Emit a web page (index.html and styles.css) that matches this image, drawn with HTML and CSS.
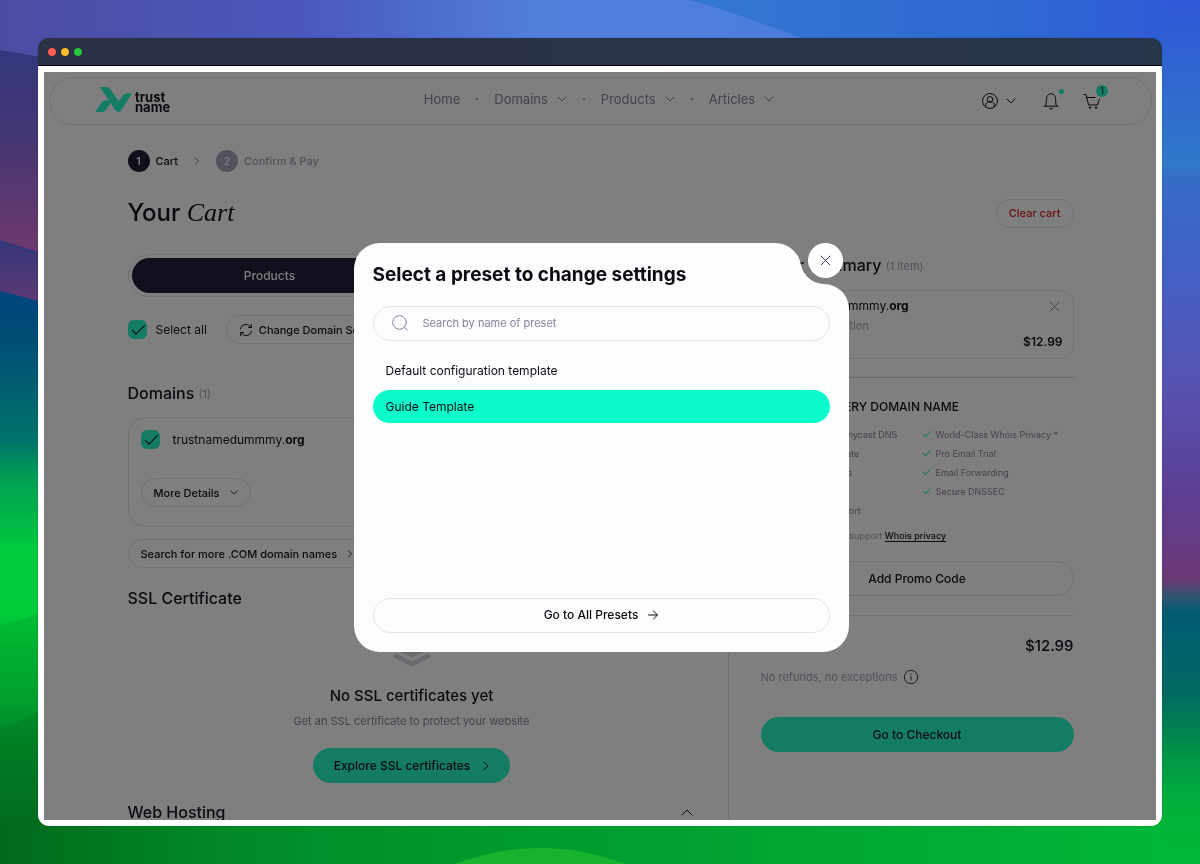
FILE: index.html
```html
<!DOCTYPE html>
<html lang="en">
<head>
<meta charset="utf-8">
<meta name="viewport" content="width=device-width, initial-scale=1">
<title>Your Cart – trustname</title>
<link rel="stylesheet" href="styles.css">
</head>
<body>
<svg class="wallpaper" viewBox="0 0 1200 864" preserveAspectRatio="none" aria-hidden="true">
  <defs>
    <linearGradient id="sky" x1="0" x2="1" y1="0" y2="0">
      <stop offset="0" stop-color="#4d4ca2"/><stop offset=".25" stop-color="#4a58bb"/><stop offset=".45" stop-color="#5080da"/><stop offset=".6" stop-color="#4f7fdc"/><stop offset="1" stop-color="#3c6fdc"/>
    </linearGradient>
    <linearGradient id="skyright" x1="0" x2="1" y1="0" y2="0">
      <stop offset="0" stop-color="#3278d2"/><stop offset=".7" stop-color="#2f66d2"/><stop offset="1" stop-color="#2f58d8"/>
    </linearGradient>
    <linearGradient id="dusk" gradientUnits="userSpaceOnUse" x1="0" y1="50" x2="0" y2="250">
      <stop offset="0" stop-color="#34387e"/><stop offset=".4" stop-color="#413673"/><stop offset="1" stop-color="#6d396e"/>
    </linearGradient>
    <linearGradient id="ridge" gradientUnits="userSpaceOnUse" x1="0" y1="240" x2="0" y2="302">
      <stop offset="0" stop-color="#343778"/><stop offset="1" stop-color="#5c3975"/>
    </linearGradient>
    <linearGradient id="valley" gradientUnits="userSpaceOnUse" x1="0" y1="290" x2="0" y2="864">
      <stop offset="0" stop-color="#00447e"/><stop offset=".1" stop-color="#005074"/><stop offset=".26" stop-color="#00726a"/><stop offset=".33" stop-color="#00a053"/><stop offset=".46" stop-color="#00cc3c"/><stop offset=".56" stop-color="#00cc38"/><stop offset=".7" stop-color="#00a42e"/><stop offset=".8" stop-color="#008025"/><stop offset="1" stop-color="#00641a"/>
    </linearGradient>
    <linearGradient id="rightside" gradientUnits="userSpaceOnUse" x1="0" y1="0" x2="0" y2="864">
      <stop offset="0" stop-color="#2f58d8"/><stop offset=".1" stop-color="#3068ce"/><stop offset=".19" stop-color="#2f78c8"/><stop offset=".21" stop-color="#366bc4"/><stop offset=".32" stop-color="#4360c2"/><stop offset=".44" stop-color="#5654b2"/><stop offset=".57" stop-color="#5c3f94"/><stop offset=".67" stop-color="#6c3876"/><stop offset=".69" stop-color="#32546f"/><stop offset=".71" stop-color="#005c74"/><stop offset=".8" stop-color="#006861"/><stop offset=".87" stop-color="#009247"/><stop offset=".93" stop-color="#00b13a"/><stop offset="1" stop-color="#00b936"/>
    </linearGradient>
    <linearGradient id="meadow" x1="0" x2="1" y1="0" y2="0">
      <stop offset="0" stop-color="#006a1c"/><stop offset=".2" stop-color="#008a26"/><stop offset=".4" stop-color="#00982c"/><stop offset=".7" stop-color="#00a632"/><stop offset="1" stop-color="#00b738"/>
    </linearGradient>
  </defs>
  <rect width="1200" height="864" fill="url(#sky)"/>
  <path d="M690 0Q760 20 860 62H1200V0Z" fill="url(#skyright)"/>
  <path d="M0 50L120 70V864H0Z" fill="url(#dusk)"/>
  <path d="M0 240L120 276V864H0Z" fill="url(#ridge)"/>
  <path d="M0 291L120 322V864H0Z" fill="url(#valley)"/>
  <path d="M0 625Q20 622 40 612V700H0Z" fill="#009c2c" opacity=".3"/>
  <path d="M0 728Q20 724 40 710V830H0Z" fill="#006a20" opacity=".25"/>
  <rect x="1162" width="38" height="864" fill="url(#rightside)"/>
  <path d="M38 810H1162V864H0V826H38Z" fill="url(#meadow)"/>
  <path d="M455 864Q540 832 625 864Z" fill="#18b32e"/>
</svg>

<div class="window">
  <div class="titlebar">
    <span class="light light-close"></span><span class="light light-min"></span><span class="light light-max"></span>
  </div>
  <div class="frame">
    <div class="app">
      <header class="header">
        <a class="logo" href="#">
          <svg width="37" height="25" viewBox="0 0 110 75" aria-hidden="true"><path d="M14 0H34Q41 0 45 6L71 43 83 26Q88 19 96 19H110L80 68Q76 75 70 75T60 69L46 48 32 70Q29 75 22 75H0L18 48Q24 40 33 40H40Z"/></svg>
          <span class="wordmark">trust<br>name</span>
        </a>
        <nav class="nav">
          <a href="#">Home</a><i class="dot"></i>
          <a href="#">Domains <svg class="chev" width="10" height="6" viewBox="0 0 10 6"><path d="M1 1l4 4 4-4"/></svg></a><i class="dot"></i>
          <a href="#">Products <svg class="chev" width="10" height="6" viewBox="0 0 10 6"><path d="M1 1l4 4 4-4"/></svg></a><i class="dot"></i>
          <a href="#">Articles <svg class="chev" width="10" height="6" viewBox="0 0 10 6"><path d="M1 1l4 4 4-4"/></svg></a>
        </nav>
        <div class="tools">
          <button class="icon-btn account" aria-label="Account">
            <svg width="18" height="18" viewBox="0 0 18 18"><circle cx="9" cy="9" r="7.500"/><circle cx="9" cy="7.300" r="2.800"/><path d="M4.800 14.600V13c0-1.800 1.200-2.900 2.800-2.900h2.800c1.600 0 2.800 1.100 2.800 2.900v1.600"/></svg>
            <svg width="10" height="6" viewBox="0 0 10 6"><path d="M1 1l4 4 4-4"/></svg>
          </button>
          <button class="icon-btn" aria-label="Notifications">
            <svg width="18" height="18" viewBox="0 0 18 18"><path d="M2 14.200h14M3.500 14c.8-1.800.8-4 .9-6.500C4.500 4 6.200 1.700 9 1.700s4.500 2.300 4.600 5.800c.1 2.500.1 4.700.9 6.500M7.300 16.300c.8 1 2.600 1 3.400 0"/></svg>
            <b class="ping"></b>
          </button>
          <button class="icon-btn" aria-label="Cart">
            <svg width="18" height="18" viewBox="0 0 18 18"><path d="M1 2.500h2l2.600 10.500h8.800l2-6M4 5.500h8M6 15.600c0 1.200 2 1.200 2 0zM12 15.600c0 1.200 2 1.200 2 0z"/></svg>
            <b class="count">1</b>
          </button>
        </div>
      </header>

      <main class="page">
        <ol class="steps">
          <li class="step"><span class="num">1</span>Cart</li>
          <li class="step-sep"><svg class="chev" width="6" height="10" viewBox="0 0 6 10"><path d="M1 1.500L4.500 5 1 8.500"/></svg></li>
          <li class="step step-next"><span class="num">2</span>Confirm &amp; Pay</li>
        </ol>
        <div class="title-row">
          <h1>Your <em>Cart</em></h1>
          <button class="pill small danger">Clear cart</button>
        </div>

        <div class="columns">
          <section class="items">
            <div class="tabs"><button class="tab active">Products</button><button class="tab" aria-label="Services"></button></div>
            <div class="select-row">
              <label class="check"><input type="checkbox" checked><span>Select all</span></label>
              <button class="pill small"><svg width="14" height="14" viewBox="0 0 14 14"><path d="M1.500 6C2 3.300 4.200 1.500 7 1.500c2.200 0 3.800 1 5 2.800M12.300 1.500v3H9.500M12.500 8C12 10.700 9.800 12.500 7 12.500c-2.200 0-3.800-1-5-2.800M1.700 12.500v-3h2.800"/></svg>Change Domain Settings</button>
            </div>
            <h2 class="domains-title">Domains <small>(1)</small></h2>
            <div class="card">
              <label class="check"><input type="checkbox" checked><span>trustnamedummmy.<strong>org</strong></span></label>
              <button class="pill small">More Details <svg width="8" height="5" viewBox="0 0 10 6"><path d="M1 1l4 4 4-4"/></svg></button>
            </div>
            <button class="pill small more">Search for more .COM domain names <svg width="6" height="8" viewBox="0 0 6 10"><path d="M1 1l4 4-4 4"/></svg></button>
            <h2>SSL Certificate</h2>
            <div class="empty">
              <svg class="stack" width="44" height="44" viewBox="0 0 44 44"><path d="M6 14l16-9 16 9-16 9zM6 23l16 8 16-8M6 32l16 8 16-8"/></svg>
              <h3>No SSL certificates yet</h3>
              <p>Get an SSL certificate to protect your website</p>
              <button class="pill primary explore">Explore SSL certificates <svg width="6" height="10" viewBox="0 0 6 10"><path d="M1 1l4 4-4 4"/></svg></button>
            </div>
            <h2 class="hosting">Web Hosting <svg width="12" height="7" viewBox="0 0 12 7"><path d="M1 6l5-5 5 5"/></svg></h2>
          </section>

          <aside class="summary">
            <h2>Order Summary <small>(1 item)</small></h2>
            <div class="order">
              <div class="order-name"><span>trustnamedummmy.<strong>org</strong></span>
                <button class="icon-btn" aria-label="Remove"><svg width="11" height="11" viewBox="0 0 11 11"><path d="M1 1l9 9M10 1l-9 9"/></svg></button></div>
              <div class="muted">Name registration</div>
              <strong class="price">$12.99</strong>
            </div>
            <h4>FREE WITH EVERY DOMAIN NAME</h4>
            <div class="perks">
              <ul>
                <li>Quick Premium Anycast DNS</li><li>Free SSL Certificate</li><li>Free DNS Records</li><li>Parking</li><li>24/7 Expert Support</li>
              </ul>
              <ul>
                <li>World-Class Whois Privacy *</li><li>Pro Email Trial</li><li>Email Forwarding</li><li>Secure DNSSEC</li>
              </ul>
            </div>
            <p class="note">* If your domain can support <a href="#">Whois privacy</a></p>
            <button class="pill wide">Add Promo Code</button>
            <div class="total"><span>Total</span><span>$12.99</span></div>
            <p class="refunds">No refunds, no exceptions <svg width="16" height="16" viewBox="0 0 16 16"><circle cx="8" cy="8" r="6.700"/><path d="M8 7.200v3.800M8 4.800v.4"/></svg></p>
            <button class="pill wide primary">Go to Checkout</button>
          </aside>
        </div>
      </main>

      <div class="scrim">
        <div class="dialog" role="dialog" aria-modal="true" aria-labelledby="dialog-title">
          <svg class="dialog-shape" viewBox="0 0 495 409" preserveAspectRatio="none" aria-hidden="true"><path d="M26 0H421A26 26 0 0 1 447 22A24 24 0 0 0 470 41A25 25 0 0 1 495 66V383A26 26 0 0 1 469 409H26A26 26 0 0 1 0 383V26A26 26 0 0 1 26 0Z"/></svg>
          <button class="close" aria-label="Close"><svg width="11" height="11" viewBox="0 0 11 11"><path d="M1 1l9 9M10 1l-9 9"/></svg></button>
          <h2 id="dialog-title">Select a preset to change settings</h2>
          <label class="search">
            <svg width="18" height="18" viewBox="0 0 18 18"><circle cx="8.500" cy="8.500" r="6.800"/><path d="M13.500 13.500l2.800 2.800"/></svg>
            <input type="search" placeholder="Search by name of preset" aria-label="Search by name of preset">
          </label>
          <div class="presets">
            <button class="preset">Default configuration template</button>
            <button class="preset selected">Guide Template</button>
          </div>
          <button class="pill wide">Go to All Presets <svg width="10" height="10" viewBox="0 0 10 10"><path d="M.5 5h9M5.500 1l4 4-4 4"/></svg></button>
        </div>
      </div>
    </div>
  </div>
</div>
</body>
</html>
```
FILE: styles.css
```css
* { box-sizing: border-box; margin: 0; padding: 0; }

:root {
  --ink: #12121f;
  --muted: #a4a3b8;
  --soft: #86859c;
  --line: #e2e2e2;
  --primary: #28f8c4;
  --paper: #fdfffd;
}

body {
  height: 100vh;
  padding: 38px;
  display: flex;
  font: 12px/16px Inter, "Liberation Sans", sans-serif;
  color: var(--ink);
  overflow: hidden;
}

button, input { font: inherit; color: inherit; }
button { background: none; border: 0; cursor: pointer; }
a { color: inherit; text-decoration: none; }
ul, ol { list-style: none; }
svg { flex: none; fill: none; stroke: currentColor; stroke-width: 1; stroke-linecap: round; stroke-linejoin: round; }
h1, h2, h3, h4 { font-weight: 500; }
small { font-size: 11px; font-weight: 400; color: var(--muted); vertical-align: 1px; }

.wallpaper { position: fixed; inset: 0; width: 100%; height: 100%; z-index: -1; stroke: none; }

.window {
  flex: 1;
  display: flex;
  flex-direction: column;
  border-radius: 11px;
  overflow: hidden;
  box-shadow: 0 0 1px rgba(0, 0, 0, .6);
}
.titlebar {
  display: flex;
  align-items: center;
  gap: 5px;
  height: 28px;
  padding-left: 10px;
  background: linear-gradient(90deg, #2c3045, #2a3349 55%, #26364b);
  border-bottom: 1px solid #05060f;
}
.light { width: 8px; height: 8px; border-radius: 50%; box-shadow: 0 0 1px #000; }
.light-close { background: #ff5f57; }
.light-min { background: #febc2e; }
.light-max { background: #28c840; }

.frame { flex: 1; display: flex; min-height: 0; padding: 6px; background: #fff; }
.app { position: relative; flex: 1; padding: 5px 4px 5px 5px; background: var(--paper); overflow: hidden; }

.header {
  display: grid;
  grid-template-columns: 1fr auto 1fr;
  align-items: center;
  height: 48px;
  padding: 0 50px 0 45px;
  border: 1px solid var(--line);
  border-radius: 24px;
}
.logo { display: flex; align-items: center; gap: 3px; }
.logo svg { margin-bottom: 3px; stroke: none; fill: var(--primary); }
.wordmark { margin-top: 2px; font-size: 13px; font-weight: 700; line-height: 10px; }
.nav { display: flex; align-items: center; gap: 16px; margin-bottom: 4px; padding-left: 2px; font-size: 13px; color: var(--soft); }
.nav a { display: flex; align-items: center; gap: 9px; }
.dot { width: 2px; height: 2px; border-radius: 50%; background: var(--soft); }
.chev { color: var(--soft); }
.tools { display: flex; justify-content: flex-end; align-items: center; gap: 23px; }
.icon-btn { position: relative; display: flex; align-items: center; gap: 7px; }
.tools .account { margin-right: 3px; }
.ping { position: absolute; top: -3px; right: -4px; width: 5px; height: 5px; border-radius: 50%; background: var(--primary); }
.count { position: absolute; top: -7px; right: -7px; width: 12px; height: 12px; border-radius: 50%; background: var(--primary); font-size: 9px; font-weight: 400; line-height: 12px; }

.page { max-width: 946px; margin: 0 auto; padding-top: 25px; }
.steps { display: flex; align-items: center; font-size: 11px; font-weight: 500; }
.step { display: flex; align-items: center; gap: 6px; }
.step-sep { display: flex; margin: 0 16px; }
.step-next { color: var(--muted); }
.num { width: 22px; height: 22px; border-radius: 50%; background: #1e2038; color: #fff; line-height: 22px; text-align: center; }
.step-next .num { background: var(--muted); }

.title-row { display: flex; justify-content: space-between; align-items: center; height: 30px; margin-top: 26px; }
h1 { font-size: 24px; line-height: 30px; }
h1 em { font-family: "Liberation Serif", serif; font-size: 26px; }

.pill {
  display: flex;
  align-items: center;
  justify-content: center;
  gap: 10px;
  height: 35px;
  padding: 0 18px;
  border: 1px solid var(--line);
  border-radius: 18px;
  font-weight: 500;
}
.small { height: 29px; padding: 0 12px; font-size: 11px; }
.wide { width: 100%; }
.primary { background: var(--primary); border-color: var(--primary); }
.danger { color: #d81c24; }
.explore { gap: 13px; padding: 0 20px; }

.columns { display: grid; grid-template-columns: 600px 1fr; margin-top: 26px; }
.items { padding-right: 32px; }
.items h2, .summary h2 { font-size: 16px; line-height: 20px; }
.tabs { display: flex; gap: 8px; padding: 3px; border: 1px solid var(--line); border-radius: 22px; }
.tab { flex: 1; height: 35px; border-radius: 18px; font-weight: 500; }
.active { background: #1e2038; color: #fff; }
.select-row { display: flex; align-items: center; gap: 19px; margin-top: 18px; }
.select-row .pill { gap: 6px; }
.check { display: flex; align-items: center; gap: 9px; }
.check input {
  appearance: none;
  width: 19px;
  height: 19px;
  border-radius: 6px;
  background: var(--primary);
}
.check input::after {
  content: "";
  display: block;
  width: 12px;
  height: 5px;
  margin: 5px 0 0 4px;
  border: solid var(--ink);
  border-width: 0 0 1px 1px;
  transform: rotate(-45deg);
}
.domains-title { margin-top: 39px; }
.card {
  display: flex;
  flex-direction: column;
  align-items: flex-start;
  gap: 29px;
  height: 110px;
  margin-top: 13px;
  padding: 12px;
  border: 1px solid var(--line);
  border-radius: 18px;
}
.card .check { gap: 13px; }
.more { margin: 12px 0 20px; }
.empty { display: flex; flex-direction: column; align-items: center; padding-top: 16px; }
.stack { color: #d8d6de; stroke-width: 5; }
.empty h3 { margin-top: 18px; font-size: 15px; line-height: 20px; }
.empty p { margin: 7px 0 19px; font-size: 11px; color: var(--soft); }
.items .hosting { display: flex; justify-content: space-between; align-items: center; margin-top: 19px; padding-right: 3px; }

.summary { padding-top: 1px; padding-left: 32px; border-left: 1px solid var(--line); }
.order {
  display: flex;
  flex-direction: column;
  height: 69px;
  margin-top: 14px;
  padding: 7px 10px 7px 15px;
  border: 1px solid var(--line);
  border-radius: 14px;
}
.order-name { display: flex; justify-content: space-between; margin-right: 3px; }
.order .icon-btn { color: var(--soft); }
.muted { margin-top: 5px; font-size: 11px; line-height: 14px; color: var(--muted); }
.price { align-self: flex-end; margin-top: 1px; font-weight: 600; }
h4 { margin-top: 18px; padding-top: 20px; border-top: 1px solid #cfcfda; font-size: 12px; line-height: 18px; }
.perks { display: grid; grid-template-columns: 161px 1fr; margin-top: 9px; font-size: 9px; line-height: 19px; color: var(--soft); }
.perks li { position: relative; padding-left: 14px; }
.perks li::before {
  content: "";
  position: absolute;
  left: 1px;
  top: 6px;
  width: 7px;
  height: 3px;
  border: solid var(--primary);
  border-width: 0 0 1px 1px;
  transform: rotate(-45deg);
}
.note { margin: 8px 0 17px; font-size: 9px; color: var(--muted); }
.note a { color: var(--ink); font-weight: 500; text-decoration: underline; text-underline-offset: 2px; }
.total { display: flex; justify-content: space-between; margin-top: 19px; padding-top: 20px; border-top: 1px solid var(--line); font-size: 15px; font-weight: 500; line-height: 20px; }
.refunds { display: flex; align-items: center; gap: 6px; margin: 13px 0 32px; font-size: 11px; color: var(--muted); }
.refunds svg { color: #3a3a48; }

.scrim {
  position: absolute;
  inset: 0;
  display: flex;
  align-items: center;
  justify-content: center;
  padding: 2px 0 0 2px;
  background: rgba(0, 0, 0, .5);
}
.dialog {
  position: relative;
  display: flex;
  flex-direction: column;
  width: 495px;
  max-width: 100%;
  height: 409px;
  padding: 19px;
  color: #0b0b14;
}
.dialog > * { position: relative; }
.dialog .dialog-shape { position: absolute; inset: 0; width: 100%; height: 100%; fill: #fcfefd; stroke: none; }
.dialog .close {
  position: absolute;
  top: 0;
  right: 6px;
  display: grid;
  place-items: center;
  width: 35px;
  height: 35px;
  border-radius: 50%;
  background: #fff;
  color: #3c3a58;
}
.dialog h2 { font-size: 19px; font-weight: 700; line-height: 26px; }
.search {
  display: flex;
  align-items: center;
  gap: 14px;
  height: 35px;
  margin-top: 18px;
  padding: 0 17px;
  border: 1px solid #e3e5e8;
  border-radius: 18px;
  color: #8583a0;
}
.search input { flex: 1; border: 0; outline: 0; background: none; font-size: 11px; color: #12121f; }
.search input::placeholder { color: #8583a0; opacity: 1; }
.presets { flex: 1; display: flex; flex-direction: column; gap: 3px; margin-top: 13px; }
.preset { height: 33px; padding: 2px 13px 0; border-radius: 17px; text-align: left; }
.selected { background: #0afccb; }
.dialog .pill { border-color: #e3e5e8; }
```
